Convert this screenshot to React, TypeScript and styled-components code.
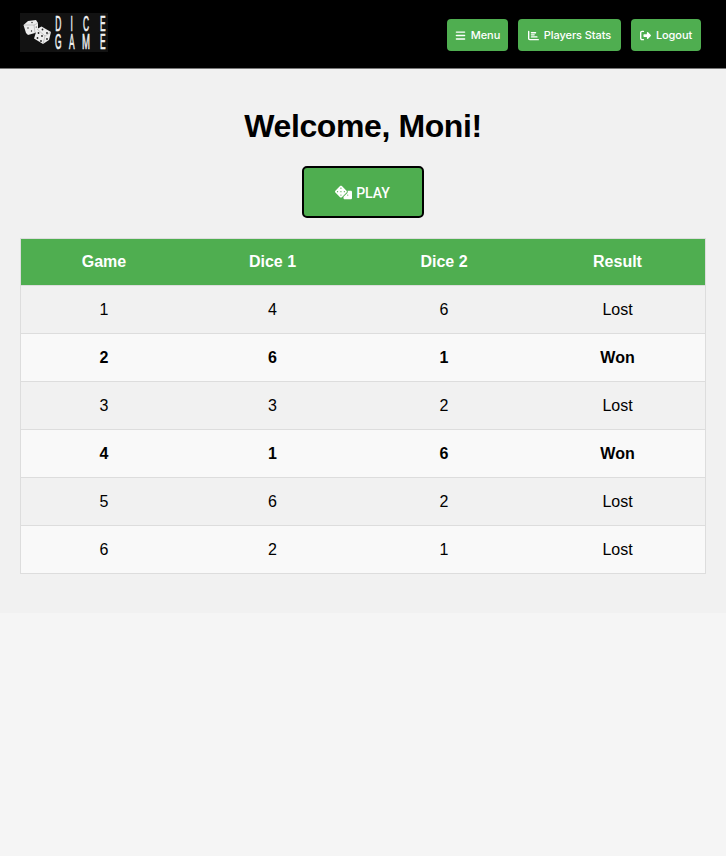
import React from "react";
import styled, { createGlobalStyle } from "styled-components";
import { FaDice } from "react-icons/fa";
import { FaBars, FaChartBar, FaRightFromBracket } from "react-icons/fa6";

const GlobalStyle = createGlobalStyle`
  * { box-sizing: border-box; }
  body {
    margin: 0;
    background: #f5f5f5;
    color: #000;
    font-family: "Liberation Sans", Arial, sans-serif;
  }
`;

const Header = styled.header`
  display: flex;
  align-items: center;
  justify-content: space-between;
  height: 69px;
  padding: 0 25px 4px 20px;
  background: #000;
  border-bottom: 1px solid #777;
`;

const Logo = styled.svg`
  display: block;
  width: 88px;
  height: 39px;
`;

const LogoLetter = styled.text`
  font-family: "Liberation Sans", Arial, sans-serif;
  font-size: 10px;
  fill: #f2f2f2;
  stroke: #f2f2f2;
  stroke-width: 0.3px;
  text-anchor: middle;
`;

const Nav = styled.nav`
  display: flex;
  gap: 10px;
  padding-top: 5px;
`;

const NavButton = styled.button<{ $width: number }>`
  display: flex;
  align-items: center;
  justify-content: center;
  gap: 5px;
  width: ${({ $width }) => $width}px;
  height: 32px;
  padding: 1px 0 0;
  border: 0;
  border-radius: 4px;
  background: #4fae50;
  color: #fff;
  font: 500 11px Inter, sans-serif;
  letter-spacing: -0.08px;
  white-space: nowrap;
  svg { flex: none; }
`;

const Main = styled.main`
  display: flex;
  flex-direction: column;
  align-items: center;
  height: 544px;
  padding: 38px 20px 0;
  background: #f1f1f1;
`;

const Title = styled.h1`
  margin: 0 0 21px;
  font-size: 32px;
  line-height: 38px;
  letter-spacing: -0.4px;
`;

const PlayButton = styled.button`
  display: flex;
  align-items: center;
  justify-content: center;
  gap: 4px;
  width: 122px;
  height: 52px;
  margin-bottom: 20px;
  padding: 1px 1px 0 0;
  border: 2px solid #000;
  border-radius: 5px;
  background: #4fae50;
  color: #fff;
  font: 500 14px Roboto, sans-serif;
`;

const TableFrame = styled.div`
  width: 686px;
  border: 1px solid #ddd;
  border-bottom: 0;
`;

const Table = styled.table`
  width: 100%;
  table-layout: fixed;
  border-spacing: 0;
  font-size: 16px;
  text-align: center;
`;

const Column = styled.col<{ $width: number }>`
  width: ${({ $width }) => $width}px;
`;

const HeadCell = styled.th`
  height: 47px;
  padding: 0;
  background: #4fae50;
  color: #fff;
  border-bottom: 1px solid #ddd;
`;

const Row = styled.tr<{ $won: boolean }>`
  font-weight: ${({ $won }) => ($won ? 700 : 400)};
  &:nth-child(even) { background: #f9f9f9; }
`;

const Cell = styled.td`
  height: 48px;
  padding: 0;
  border-bottom: 1px solid #ddd;
`;

const games = [[4, 6], [6, 1], [3, 2], [1, 6], [6, 2], [2, 1]];
const letterCenters = [38.3, 51.7, 66, 82.7];

function DiceLogo() {
  return (
    <Logo viewBox="0 0 88 39" role="img" aria-label="Dice Game">
      <rect width="88" height="39" fill="#121212" />
      <g fill="#ededed">
        <path d="M3.5 12 8 8 16 7 18 10 18 18 15 20 8 22 6 20Z" />
        <path d="M21.5 13.5 31 19 29 27 23 31 14 25.5 17 16Z" />
      </g>
      <g fill="none" stroke="#999" strokeWidth=".5">
        <path d="m4 12 10 0 4-2M14 12l1 8" />
        <path d="m17 16 8 7 6-4M25 23l-2 8" />
      </g>
      <g fill="#222">
        <circle cx="8" cy="15" r=".7" />
        <circle cx="11.5" cy="18" r=".7" />
        <circle cx="12" cy="9.5" r=".7" />
        <circle cx="16.3" cy="14" r=".6" />
        <circle cx="18.5" cy="20" r=".9" />
        <circle cx="22" cy="23" r=".9" />
        <circle cx="17.5" cy="25" r=".9" />
        <circle cx="21" cy="28" r=".9" />
        <circle cx="22.5" cy="16.5" r=".9" />
        <circle cx="27" cy="20" r=".9" />
        <circle cx="27" cy="26" r=".9" />
      </g>
      {["DICE", "GAME"].map((word, row) =>
        word.split("").map((letter, i) => (
          <LogoLetter
            key={`${row}${i}`}
            transform={`translate(${letterCenters[i]} ${row ? 36 : 17.8}) scale(${letter === "M" ? 0.96 : 0.84} 2.15)`}
          >
            {letter}
          </LogoLetter>
        ))
      )}
    </Logo>
  );
}

export default function App() {
  return (
    <>
      <GlobalStyle />
      <Header>
        <DiceLogo />
        <Nav>
          <NavButton $width={61}><FaBars size={11} />Menu</NavButton>
          <NavButton $width={103}><FaChartBar size={11} />Players Stats</NavButton>
          <NavButton $width={70}><FaRightFromBracket size={11} />Logout</NavButton>
        </Nav>
      </Header>
      <Main>
        <Title>Welcome, Moni!</Title>
        <PlayButton><FaDice size={17} />PLAY</PlayButton>
        <TableFrame>
          <Table>
            <colgroup>
              <Column $width={166} />
              <Column $width={171} />
              <Column $width={172} />
              <Column $width={175} />
            </colgroup>
            <thead>
              <tr>
                {["Game", "Dice 1", "Dice 2", "Result"].map((name) => (
                  <HeadCell key={name}>{name}</HeadCell>
                ))}
              </tr>
            </thead>
            <tbody>
              {games.map(([first, second], i) => {
                const won = first + second === 7;
                return (
                  <Row key={i} $won={won}>
                    <Cell>{i + 1}</Cell>
                    <Cell>{first}</Cell>
                    <Cell>{second}</Cell>
                    <Cell>{won ? "Won" : "Lost"}</Cell>
                  </Row>
                );
              })}
            </tbody>
          </Table>
        </TableFrame>
      </Main>
    </>
  );
}
